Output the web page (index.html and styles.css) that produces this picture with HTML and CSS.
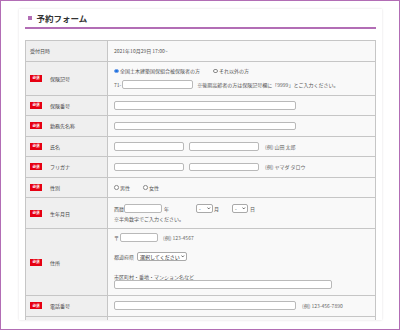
FILE: index.html
```html
<!DOCTYPE html>
<html lang="ja">
<head>
<meta charset="utf-8">
<title>予約フォーム</title>
<link rel="stylesheet" href="styles.css">
</head>
<body>
<div class="frame">
  <div class="page">
    <div class="heading">
      <span class="heading-mark"></span>
      <h1>予約フォーム</h1>
    </div>
    <div class="form-table">
      <div class="row">
        <div class="th">受付日時</div>
        <div class="td">2021年10月29日 17:00~</div>
      </div>
      <div class="row row-insurance">
        <div class="th"><span class="req">必須</span>保険記号</div>
        <div class="td stack gap-ins">
          <div class="line">
            <input type="radio" class="radio" name="ins" checked><span>全国土木建築国保組合被保険者の方</span>
            <input type="radio" class="radio spaced" name="ins"><span>それ以外の方</span>
          </div>
          <div class="line">
            <span>71-</span><input type="text" class="field w-md tall after-prefix"><span class="note">※後期高齢者の方は保険記号欄に「9999」とご入力ください。</span>
          </div>
        </div>
      </div>
      <div class="row">
        <div class="th"><span class="req">必須</span>保険番号</div>
        <div class="td"><input type="text" class="field w-lg"></div>
      </div>
      <div class="row">
        <div class="th"><span class="req">必須</span>勤務先名称</div>
        <div class="td"><input type="text" class="field w-lg"></div>
      </div>
      <div class="row">
        <div class="th"><span class="req">必須</span>氏名</div>
        <div class="td"><input type="text" class="field w-name"><input type="text" class="field w-name pair"><span class="example">(例) 山田 太郎</span></div>
      </div>
      <div class="row">
        <div class="th"><span class="req">必須</span>フリガナ</div>
        <div class="td"><input type="text" class="field w-name"><input type="text" class="field w-name pair"><span class="example">(例) ヤマダ タロウ</span></div>
      </div>
      <div class="row">
        <div class="th"><span class="req">必須</span>性別</div>
        <div class="td">
          <input type="radio" class="radio" name="sex"><span>男性</span>
          <input type="radio" class="radio spaced" name="sex"><span>女性</span>
        </div>
      </div>
      <div class="row row-birth">
        <div class="th"><span class="req">必須</span>生年月日</div>
        <div class="td stack gap-birth">
          <div class="line">
            <span>西暦</span><input type="text" class="field w-sm"><span class="unit">年</span>
            <span class="select sel-month">-<svg class="chev" viewBox="0 0 6 4"><polyline points="0.8,0.8 3,3.1 5.2,0.8"/></svg></span><span class="unit-tight">月</span>
            <span class="select sel-day">-<svg class="chev" viewBox="0 0 6 4"><polyline points="0.8,0.8 3,3.1 5.2,0.8"/></svg></span><span class="unit">日</span>
          </div>
          <div class="line-text">※半角数字でご入力ください。</div>
        </div>
      </div>
      <div class="row row-address">
        <div class="th"><span class="req">必須</span>住所</div>
        <div class="td stack address">
          <div class="line">
            <span>〒</span><input type="text" class="field w-sm tall after-prefix"><span class="example zip">(例) 123-4567</span>
          </div>
          <div class="line pref">
            <span>都道府県</span><span class="select sel-pref">選択してください<svg class="chev" viewBox="0 0 6 4"><polyline points="0.8,0.8 3,3.1 5.2,0.8"/></svg></span>
          </div>
          <div class="line-text city">市区町村・番地・マンション名など</div>
          <input type="text" class="field w-xl tall">
        </div>
      </div>
      <div class="row">
        <div class="th"><span class="req">必須</span>電話番号</div>
        <div class="td"><input type="text" class="field w-lg tall"><span class="example">(例) 123-456-7890</span></div>
      </div>
      <div class="row">
        <div class="th"></div>
        <div class="td"></div>
      </div>
    </div>
  </div>
</div>
</body>
</html>
```
FILE: styles.css
```css
* {
  box-sizing: border-box;
  margin: 0;
  padding: 0;
}

body {
  margin: 0;
  width: 400px;
  height: 330px;
  background: #fff;
  font-family: "Noto Sans CJK JP", "Noto Sans", sans-serif;
}

.frame {
  width: 400px;
  height: 330px;
  border: 1px solid #b26db5;
  padding: 8px 0 0 18px;
  background: #fff;
}

.page {
  width: 363px;
  height: 311px;
  overflow: hidden;
  background: #fff;
  box-shadow: 0 0 2px rgba(120, 100, 120, 0.22);
  padding: 0 6px;
}

.heading {
  height: 20px;
  display: flex;
  align-items: center;
  gap: 5px;
  padding-left: 3px;
  border-bottom: 2px solid #b26db5;
}

.heading-mark {
  width: 3.5px;
  height: 3.5px;
  background: #b26db5;
}

.heading h1 {
  font-size: 8.5px;
  line-height: 1;
  font-weight: 700;
  color: #333;
}

.form-table {
  margin-top: 11px;
  border: 1px solid #c6c6c6;
  border-bottom: none;
}

.row {
  display: grid;
  grid-template-columns: 82px 1fr;
  height: 20.5px;
  border-bottom: 1px solid #c6c6c6;
}

.row-insurance { height: 34px; }
.row-birth { height: 31px; }
.row-address { height: 67px; }

.th {
  background: #efefef;
  border-right: 1px solid #c6c6c6;
  display: flex;
  align-items: center;
  padding-left: 4px;
  font-size: 5px;
  line-height: 1;
  color: #444;
}

.req {
  width: 12px;
  height: 7px;
  margin-right: 8px;
  background: #e60012;
  color: #fff;
  font-size: 3.6px;
  font-weight: 700;
  display: inline-flex;
  align-items: center;
  justify-content: center;
}

.td {
  background: #f9f9f9;
  padding-left: 6px;
  display: flex;
  align-items: center;
  font-size: 5px;
  line-height: 1;
  color: #555;
  white-space: nowrap;
}

.stack {
  flex-direction: column;
  align-items: flex-start;
  justify-content: center;
}

.gap-ins { gap: 5.5px; }
.gap-birth { gap: 2px; }

.address {
  justify-content: flex-start;
  padding-top: 4px;
}

.line {
  display: flex;
  align-items: center;
  min-height: 7px;
}

.line-text {
  line-height: 7px;
}

.pref { margin-top: 10px; }
.city { margin-top: 12px; }

.radio {
  appearance: none;
  -webkit-appearance: none;
  width: 4.5px;
  height: 4.5px;
  border: 0.7px solid #8a8a8a;
  border-radius: 50%;
  background: #fff;
  margin: 0 1.5px 0 0;
  flex-shrink: 0;
}

.radio:checked {
  border-color: #7aa6ea;
  background: #1a6fe0;
}

.radio.spaced { margin-left: 13px; }

.field {
  display: block;
  height: 8.5px;
  border: 1px solid #b9b9b9;
  border-radius: 2px;
  background: #fff;
  flex-shrink: 0;
  outline: none;
}

.field.tall { height: 9px; }

.w-sm { width: 38px; }
.w-md { width: 71px; }
.w-name { width: 70px; }
.w-lg { width: 182px; }
.w-xl { width: 218px; }

.pair { margin-left: 5px; }
.after-prefix { margin-left: 1px; }

.note {
  margin-left: 4px;
  color: #555;
}

.example {
  margin-left: 6px;
  color: #666;
}

.example.zip { margin-left: 5px; }

.unit { margin-left: 2px; }
.unit-tight { margin-left: 1px; }

.select {
  display: inline-flex;
  align-items: center;
  justify-content: space-between;
  height: 8.5px;
  padding: 0 1.5px 0 2px;
  border: 1px solid #a9a9a9;
  border-radius: 2px;
  background: #fff;
  color: #333;
  flex-shrink: 0;
}

.sel-month { width: 17px; margin-left: 27px; }
.sel-day { width: 16px; margin-left: 13px; }
.sel-pref { width: 50px; margin-left: 3px; color: #222; }

.chev {
  width: 3.5px;
  height: 2.5px;
  fill: none;
  stroke: #333;
  stroke-width: 1.3;
}
```
